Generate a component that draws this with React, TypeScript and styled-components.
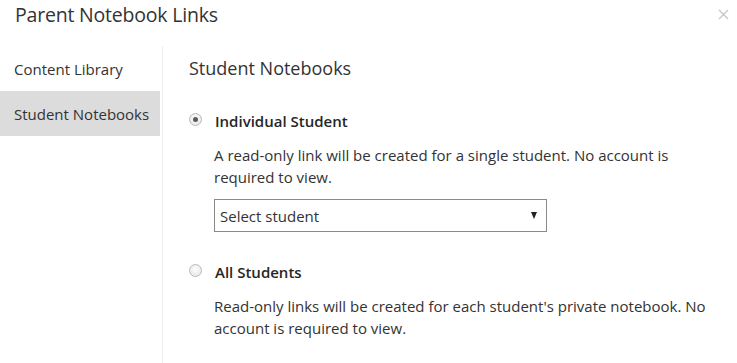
import React, { useState } from 'react';
import styled, { createGlobalStyle } from 'styled-components';

const GlobalStyle = createGlobalStyle`
  html, body {
    margin: 0;
    padding: 0;
    background: #fff;
  }
  body {
    font-family: 'Open Sans', 'Noto Sans', Arial, sans-serif;
    color: #333;
  }
`;

const Dialog = styled.div`
  width: 737px;
  height: 363px;
  overflow: hidden;
  display: flex;
  flex-direction: column;
  background: #fff;
`;

const Header = styled.div`
  display: flex;
  flex-shrink: 0;
  align-items: flex-start;
  justify-content: space-between;
  padding: 2px 4px 0 15px;
  height: 43px;
  box-sizing: border-box;
`;

const Title = styled.h1`
  margin: 0;
  font-size: 19.5px;
  font-weight: 400;
  line-height: 26px;
  color: #333;
  letter-spacing: -0.2px;
`;

const CloseButton = styled.button`
  border: none;
  background: none;
  padding: 4px;
  margin-top: 3px;
  cursor: pointer;
  display: flex;
`;

const Body = styled.div`
  flex: 1;
  min-height: 0;
  display: flex;
  padding-top: 3px;
`;

const Sidebar = styled.nav`
  width: 160px;
  flex-shrink: 0;
  display: flex;
  flex-direction: column;
`;

const NavItem = styled.div<{ $active?: boolean }>`
  height: 45px;
  flex-shrink: 0;
  display: flex;
  align-items: center;
  padding-left: 14px;
  font-size: 15px;
  color: #333;
  background: ${({ $active }) => ($active ? '#dcdcdc' : 'transparent')};
  cursor: pointer;
`;

const Content = styled.section`
  flex: 1;
  margin-left: 2px;
  border-left: 1px solid #efefef;
  padding: 10px 0 0 26px;
  display: flex;
  flex-direction: column;
`;

const Heading = styled.h2`
  margin: 0 0 29px;
  font-size: 18px;
  font-weight: 400;
  line-height: 24px;
  color: #333;
`;

const Option = styled.div`
  display: flex;
  flex-direction: column;
  flex-shrink: 0;
  margin-bottom: 28px;
`;

const OptionRow = styled.label`
  display: flex;
  align-items: center;
  gap: 13px;
  cursor: pointer;
  height: 24px;
`;

const Radio = styled.span<{ $checked?: boolean }>`
  width: 11px;
  height: 11px;
  border-radius: 50%;
  border: 1px solid #b9b9b9;
  background: radial-gradient(circle at 50% 40%, #fdfdfd 0%, #e3e3e3 100%);
  display: flex;
  align-items: center;
  justify-content: center;
  margin-top: -3px;
  &::after {
    content: '';
    width: 5px;
    height: 5px;
    border-radius: 50%;
    background: ${({ $checked }) => ($checked ? '#5a5a5a' : 'transparent')};
  }
`;

const OptionLabel = styled.span`
  font-size: 15px;
  font-weight: 600;
  color: #262626;
`;

const Description = styled.p`
  margin: 11px 0 0 25px;
  font-size: 15px;
  line-height: 22px;
  color: #333;
  max-width: 500px;
`;

const SelectBox = styled.div`
  margin: 11px 0 0 25px;
  width: 333px;
  height: 33px;
  box-sizing: border-box;
  border: 1px solid #8a8a8a;
  display: flex;
  align-items: center;
  justify-content: space-between;
  padding: 0 9px 0 5px;
  font-size: 15px;
  color: #333;
  cursor: pointer;
`;

const Caret = styled.span`
  width: 0;
  height: 0;
  border-left: 3.5px solid transparent;
  border-right: 3.5px solid transparent;
  border-top: 7px solid #222;
  margin-top: -1px;
`;

export default function App() {
  const [mode, setMode] = useState<'individual' | 'all'>('individual');

  return (
    <>
      <GlobalStyle />
      <Dialog>
        <Header>
          <Title>Parent Notebook Links</Title>
          <CloseButton aria-label="Close">
            <svg width="11" height="11" viewBox="0 0 11 11">
              <path d="M1 1 L10 10 M10 1 L1 10" stroke="#c8c8c8" strokeWidth="1.4" />
            </svg>
          </CloseButton>
        </Header>
        <Body>
          <Sidebar>
            <NavItem>Content Library</NavItem>
            <NavItem $active>Student Notebooks</NavItem>
          </Sidebar>
          <Content>
            <Heading>Student Notebooks</Heading>
            <Option>
              <OptionRow onClick={() => setMode('individual')}>
                <Radio $checked={mode === 'individual'} />
                <OptionLabel>Individual Student</OptionLabel>
              </OptionRow>
              <Description>
                A read-only link will be created for a single student. No account is required to view.
              </Description>
              <SelectBox>
                <span>Select student</span>
                <Caret />
              </SelectBox>
            </Option>
            <Option>
              <OptionRow onClick={() => setMode('all')}>
                <Radio $checked={mode === 'all'} />
                <OptionLabel>All Students</OptionLabel>
              </OptionRow>
              <Description>
                Read-only links will be created for each student's private notebook. No account is required to view.
              </Description>
            </Option>
          </Content>
        </Body>
      </Dialog>
    </>
  );
}
